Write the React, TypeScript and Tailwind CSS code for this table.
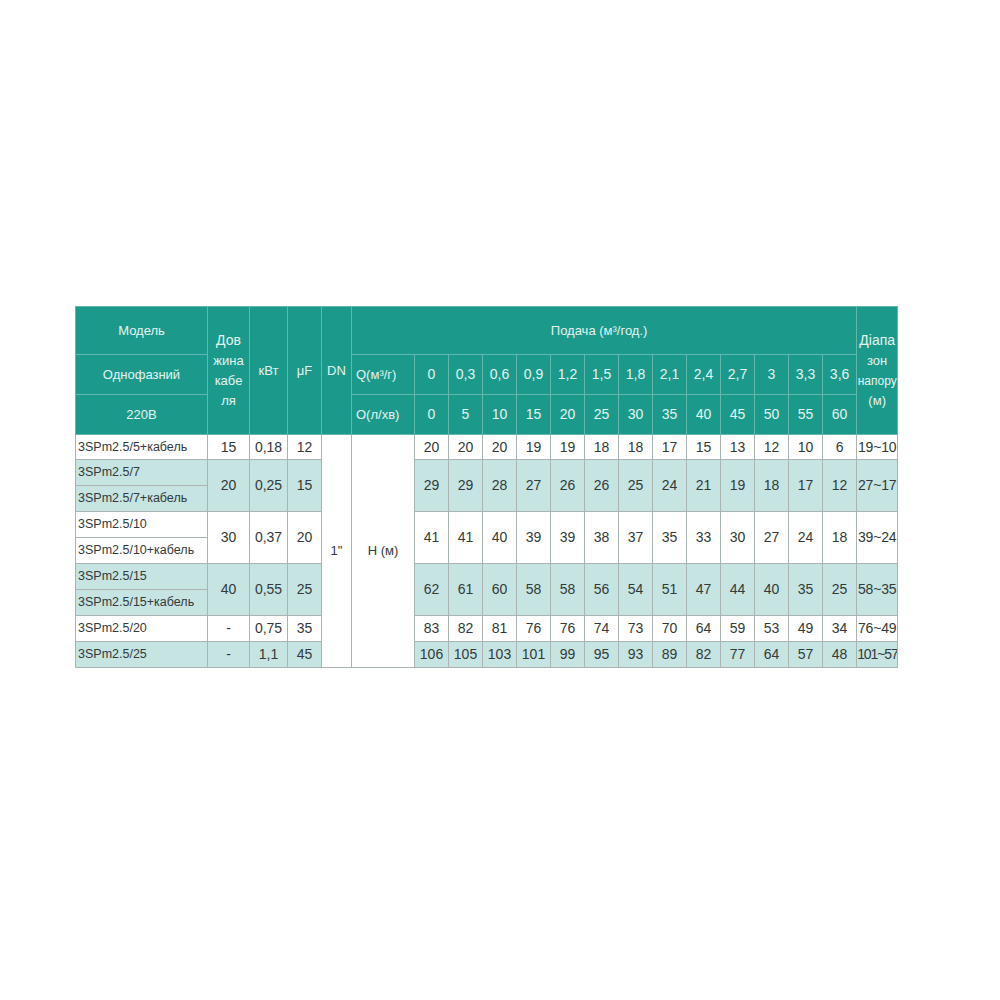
import React from 'react'

const qValues = ['0', '0,3', '0,6', '0,9', '1,2', '1,5', '1,8', '2,1', '2,4', '2,7', '3', '3,3', '3,6']
const oValues = ['0', '5', '10', '15', '20', '25', '30', '35', '40', '45', '50', '55', '60']

interface Group {
  models: string[]
  length: string
  kw: string
  uf: string
  heads: string[]
  range: string
  tint: boolean
}

const groups: Group[] = [
  {
    models: ['3SPm2.5/5+кабель'],
    length: '15',
    kw: '0,18',
    uf: '12',
    heads: ['20', '20', '20', '19', '19', '18', '18', '17', '15', '13', '12', '10', '6'],
    range: '19~10',
    tint: false,
  },
  {
    models: ['3SPm2.5/7', '3SPm2.5/7+кабель'],
    length: '20',
    kw: '0,25',
    uf: '15',
    heads: ['29', '29', '28', '27', '26', '26', '25', '24', '21', '19', '18', '17', '12'],
    range: '27~17',
    tint: true,
  },
  {
    models: ['3SPm2.5/10', '3SPm2.5/10+кабель'],
    length: '30',
    kw: '0,37',
    uf: '20',
    heads: ['41', '41', '40', '39', '39', '38', '37', '35', '33', '30', '27', '24', '18'],
    range: '39~24',
    tint: false,
  },
  {
    models: ['3SPm2.5/15', '3SPm2.5/15+кабель'],
    length: '40',
    kw: '0,55',
    uf: '25',
    heads: ['62', '61', '60', '58', '58', '56', '54', '51', '47', '44', '40', '35', '25'],
    range: '58~35',
    tint: true,
  },
  {
    models: ['3SPm2.5/20'],
    length: '-',
    kw: '0,75',
    uf: '35',
    heads: ['83', '82', '81', '76', '76', '74', '73', '70', '64', '59', '53', '49', '34'],
    range: '76~49',
    tint: false,
  },
  {
    models: ['3SPm2.5/25'],
    length: '-',
    kw: '1,1',
    uf: '45',
    heads: ['106', '105', '103', '101', '99', '95', '93', '89', '82', '77', '64', '57', '48'],
    range: '101~57',
    tint: true,
  },
]

const head = 'bg-[#1b9a8b] text-[#e3f3f0] border border-[#62b8ad] text-[13px] font-normal text-center align-middle p-0'
const cell = 'border border-[#a9b4b3] text-center align-middle p-0'

export default function App() {
  return (
    <div className="min-h-screen bg-white pt-[306px] pl-[75px] font-['Liberation_Sans',Arial,sans-serif]">
      <table className="table-fixed border-collapse w-[822px] border border-[#b6bcbc] text-[#343a3a]">
        <colgroup>
          <col className="w-[132px]" />
          <col className="w-[42px]" />
          <col className="w-[38px]" />
          <col className="w-[34px]" />
          <col className="w-[30px]" />
          <col className="w-[63px]" />
          {qValues.map((_, i) => (
            <col key={i} className="w-[34px]" />
          ))}
          <col className="w-[41px]" />
        </colgroup>
        <thead>
          <tr className="h-[48px]">
            <th className={head}>Модель</th>
            <th rowSpan={3} className={`${head} leading-[20px]`}>
              <span className="text-[14px]">Дов</span>
              <br />
              жина
              <br />
              кабе
              <br />
              ля
            </th>
            <th rowSpan={3} className={head}>кВт</th>
            <th rowSpan={3} className={head}>μF</th>
            <th rowSpan={3} className={head}>DN</th>
            <th colSpan={14} className={`${head} pr-[10px]`}>Подача (м³/год.)</th>
            <th rowSpan={3} className={`${head} leading-[20px]`}>
              <span className="text-[14px]">Діапа</span>
              <br />
              зон
              <br />
              <span className="text-[12px]">напору</span>
              <br />
              (м)
            </th>
          </tr>
          <tr className="h-[40px]">
            <th className={head}>Однофазний</th>
            <th className={`${head} text-left pl-1`}>Q(м³/г)</th>
            {qValues.map((q, i) => (
              <th key={i} className={`${head} text-[14px]`}>
                {q}
              </th>
            ))}
          </tr>
          <tr className="h-[40px]">
            <th className={head}>220В</th>
            <th className={`${head} text-left pl-1`}>O(л/хв)</th>
            {oValues.map((o, i) => (
              <th key={i} className={`${head} text-[14px]`}>
                {o}
              </th>
            ))}
          </tr>
        </thead>
        <tbody>
          {groups.map((g, gi) =>
            g.models.map((model, mi) => {
              const bg = g.tint ? 'bg-[#c5e4e2]' : 'bg-white'
              const span = g.models.length
              // long range value gets squeezed like in the source
              const rangeFit = g.range.length > 5 ? 'tracking-[-1.1px]' : 'tracking-[-0.2px]'
              return (
                <tr key={`${gi}-${mi}`} className={gi === 0 ? 'h-[25px]' : 'h-[26px]'}>
                  <td className={`${cell} ${bg} text-left pl-[2px] text-[12.5px] whitespace-nowrap`}>{model}</td>
                  {mi === 0 && (
                    <>
                      <td rowSpan={span} className={`${cell} ${bg} text-[14px]`}>
                        {g.length}
                      </td>
                      <td rowSpan={span} className={`${cell} ${bg} text-[14px]`}>
                        {g.kw}
                      </td>
                      <td rowSpan={span} className={`${cell} ${bg} text-[14px]`}>
                        {g.uf}
                      </td>
                      {gi === 0 && (
                        <>
                          <td rowSpan={9} className={`${cell} bg-white text-[13px]`}>
                            1"
                          </td>
                          <td rowSpan={9} className={`${cell} bg-white text-[13px]`}>
                            H (м)
                          </td>
                        </>
                      )}
                      {g.heads.map((h, hi) => (
                        <td key={hi} rowSpan={span} className={`${cell} ${bg} text-[14px]`}>
                          {h}
                        </td>
                      ))}
                      <td rowSpan={span} className={`${cell} ${bg} text-[14px] ${rangeFit} whitespace-nowrap overflow-hidden`}>
                        {g.range}
                      </td>
                    </>
                  )}
                </tr>
              )
            })
          )}
        </tbody>
      </table>
    </div>
  )
}
